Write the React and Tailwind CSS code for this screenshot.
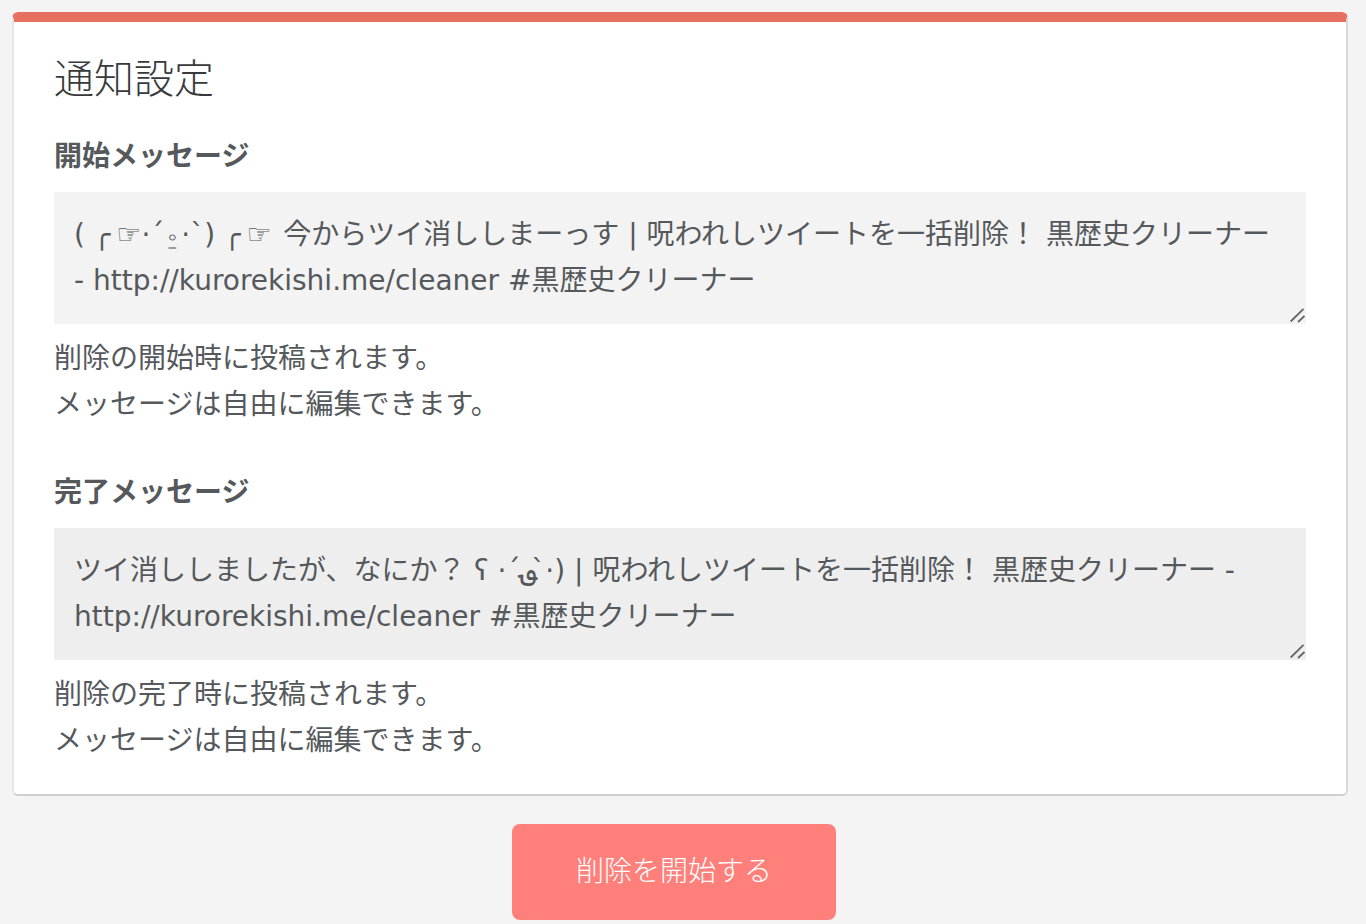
function Section({ label, value, bg, help }) {
  return (
    <div className="flex flex-col">
      <label className="text-[28px] leading-[46px] font-bold text-[#55595c] pt-[3px] mb-[12px]">{label}</label>
      <div className="relative">
        <textarea
          readOnly
          rows={2}
          value={value}
          className={`block w-full h-[132px] ${bg} pl-[20px] pr-[24px] pt-[20px] pb-[16px] text-[28px] leading-[46px] text-[#55595c] outline-none resize-none rounded-none border-0 [font-family:inherit]`}
        />
        <svg className="absolute right-0 bottom-0" width="18" height="18" viewBox="0 0 18 18" fill="none" stroke="#666666" strokeWidth="1.8">
          <path d="M2.7 15.5 L15.5 2.8" />
          <path d="M10 16 L16.5 10" />
        </svg>
      </div>
      <p className="text-[28px] leading-[46px] text-[#55595c] mt-[12px]">
        {help}
        <br />
        メッセージは自由に編集できます。
      </p>
    </div>
  );
}

export default function App() {
  return (
    <div className="min-h-[924px] bg-[#f4f4f4] px-[12px] pt-[12px] pb-[4px] [font-family:'DejaVu_Sans','Noto_Sans_CJK_JP',sans-serif]">
      <div className="w-[1336px] bg-white rounded-[6px] border-x-2 border-b-2 border-t-[10px] border-x-[#e6e6e6] border-b-[#cfcfcf] border-r-[#d8d8d8] border-t-[#e87061] px-[40px] pt-[29px] pb-[30px]">
        <h1 className="text-[40px] leading-[56px] text-[#373a3c] font-light mb-[24px]">通知設定</h1>
        <div className="flex flex-col gap-[39px]">
          <Section
            label="開始メッセージ"
            bg="bg-[#f3f3f3]"
            value={"( ╭\u2009☞·´⍛·`) ╭\u2009☞\u200A 今からツイ消ししまーっす | 呪われしツイートを一括削除！ 黒歴史クリーナー - http://kurorekishi.me/cleaner #黒歴史クリーナー"}
            help="削除の開始時に投稿されます。"
          />
          <Section
            label="完了メッセージ"
            bg="bg-[#eeeeee]"
            value="ツイ消ししましたが、なにか？ ʕ ·´؈ ·̀) | 呪われしツイートを一括削除！ 黒歴史クリーナー - http://kurorekishi.me/cleaner #黒歴史クリーナー"
            help="削除の完了時に投稿されます。"
          />
        </div>
      </div>
      <div className="flex justify-center mt-[28px] w-[1324px]">
        <button className="w-[324px] h-[96px] rounded-[8px] bg-[#ff7f7b] text-[28px] text-white font-light">
          削除を開始する
        </button>
      </div>
    </div>
  );
}
